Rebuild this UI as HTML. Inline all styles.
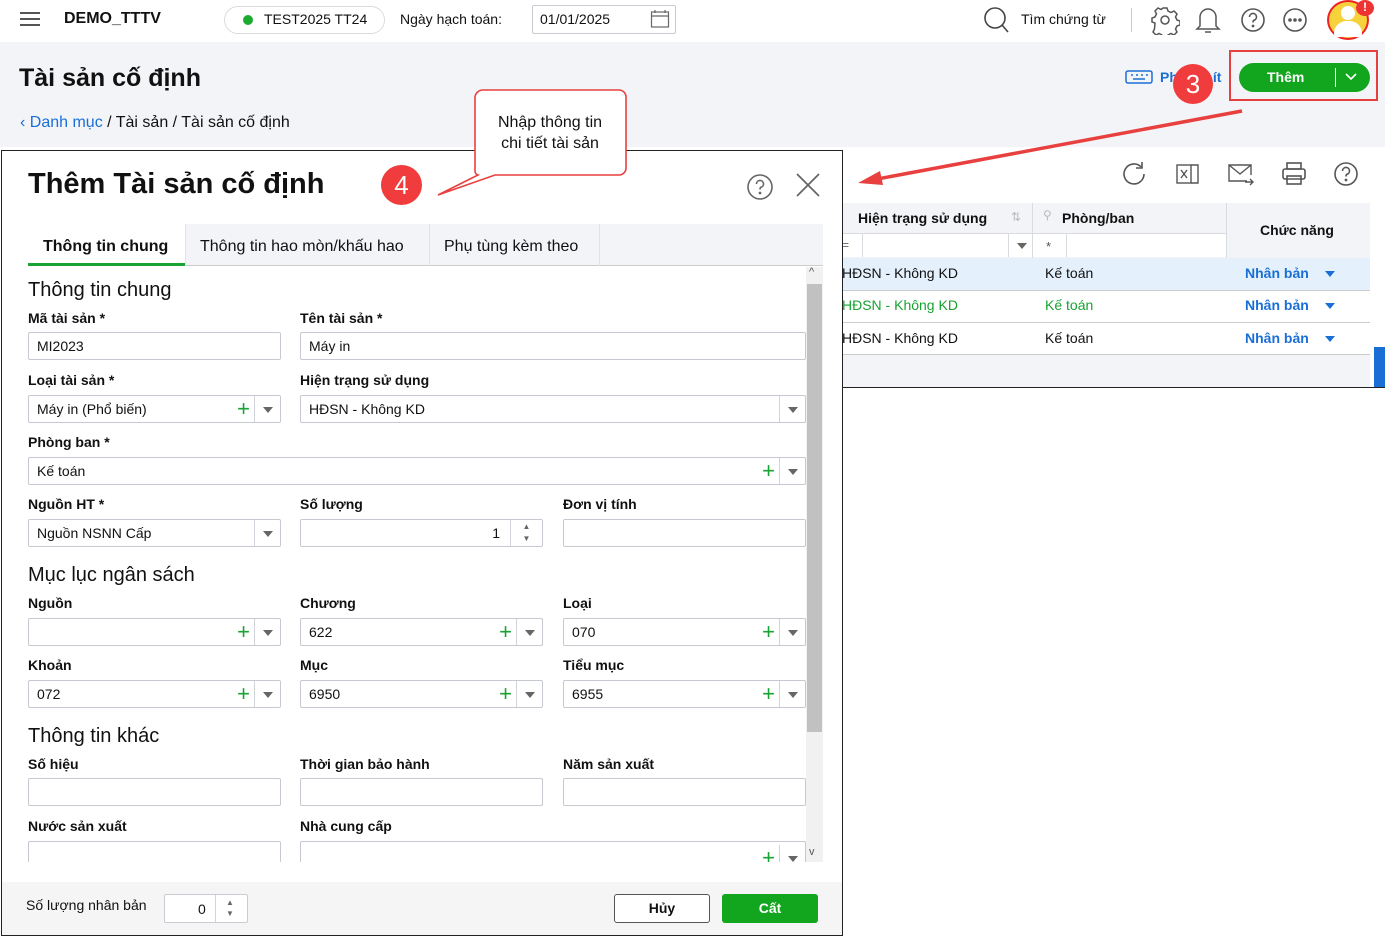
<!DOCTYPE html>
<html><head><meta charset="utf-8">
<style>
*{box-sizing:border-box;margin:0;padding:0}
body{width:1385px;height:937px;position:relative;overflow:hidden;background:#fff;font-family:"Liberation Sans",sans-serif;color:#111;font-size:14px}
.a{position:absolute}
.lbl{position:absolute;font-weight:bold;font-size:14px;color:#111;white-space:nowrap}
.in{position:absolute;height:28px;border:1px solid #c6c9d0;border-radius:2px;background:#fff;font-size:14px;line-height:26px;padding-left:8px;white-space:nowrap}
.dd{position:absolute;right:0;top:0;width:26px;height:26px;border-left:1px solid #d0d3d9}
.dd:after{content:"";position:absolute;left:8px;top:11px;border-left:5px solid transparent;border-right:5px solid transparent;border-top:6px solid #666}
.pl{position:absolute;right:30px;top:0;color:#19a332;font-size:22px;line-height:25px;font-weight:normal}
.sec{position:absolute;font-size:20px;color:#111;white-space:nowrap}
.ico{position:absolute}
</style></head><body>
<!-- top bar -->
<div class="a" style="left:0;top:0;width:1385px;height:42px;background:#fff"></div>
<div class="a" style="left:20px;top:12px;width:20px;height:2px;background:#555;box-shadow:0 6px 0 #555,0 12px 0 #555"></div>
<div class="a" style="left:64px;top:10px;font-weight:bold;font-size:16px">DEMO_TTTV</div>
<div class="a" style="left:224px;top:6px;width:161px;height:28px;border:1px solid #d8dbe0;border-radius:14px"></div>
<div class="a" style="left:243px;top:15px;width:10px;height:10px;border-radius:50%;background:#1aab2e"></div>
<div class="a" style="left:264px;top:11px;font-size:14px">TEST2025 TT24</div>
<div class="a" style="left:400px;top:11px;font-size:14px">Ngày hạch toán:</div>
<div class="a" style="left:532px;top:5px;width:144px;height:29px;border:1px solid #c9ccd3;border-radius:2px"></div>
<div class="a" style="left:540px;top:11px;font-size:14px">01/01/2025</div>
<svg class="ico" style="left:650px;top:9px" width="20" height="20" viewBox="0 0 20 20" fill="none" stroke="#666" stroke-width="1.2"><rect x="1.5" y="3" width="17" height="15"/><line x1="1.5" y1="7" x2="18.5" y2="7"/><line x1="5" y1="1" x2="5" y2="4"/><line x1="15" y1="1" x2="15" y2="4"/></svg>
<svg class="ico" style="left:983px;top:6px" width="28" height="28" viewBox="0 0 28 28" fill="none" stroke="#444" stroke-width="1.6"><circle cx="12" cy="12" r="10"/><line x1="19" y1="19" x2="25" y2="26"/></svg>
<div class="a" style="left:1021px;top:11px;font-size:14px">Tìm chứng từ</div>
<div class="a" style="left:1131px;top:8px;width:1px;height:24px;background:#ccc"></div>
<svg class="ico" style="left:1150px;top:5px" width="30" height="30" viewBox="0 0 30 30" fill="none" stroke="#555" stroke-width="1.5"><circle cx="15" cy="15" r="4"/><path d="M13 3h4l1 3 3 1.5 3-1.5 3 3-1.5 3 1.5 3 3 1v4l-3 1-1.5 3 1.5 3-3 3-3-1.5-3 1.5-1 3h-4l-1-3-3-1.5-3 1.5-3-3 1.5-3L5 18l-3-1v-4l3-1 1.5-3L5 6l3-3 3 1.5z"/></svg>
<svg class="ico" style="left:1194px;top:5px" width="28" height="30" viewBox="0 0 28 30" fill="none" stroke="#555" stroke-width="1.5"><path d="M6 21V12a8 8 0 0 1 16 0v9l3 3H3z"/><path d="M11 27h6"/></svg>
<svg class="ico" style="left:1240px;top:7px" width="26" height="26" viewBox="0 0 26 26" fill="none" stroke="#555" stroke-width="1.6"><circle cx="13" cy="13" r="11"/><path d="M9.5 10a3.5 3.5 0 1 1 4.5 3.3c-1 .4-1 1-1 2.2"/><circle cx="13" cy="19" r=".6" fill="#555"/></svg>
<svg class="ico" style="left:1282px;top:7px" width="26" height="26" viewBox="0 0 26 26" fill="none" stroke="#555" stroke-width="1.6"><circle cx="13" cy="13" r="11"/><circle cx="8" cy="13" r="1" fill="#555"/><circle cx="13" cy="13" r="1" fill="#555"/><circle cx="18" cy="13" r="1" fill="#555"/></svg>
<div class="a" style="left:1327px;top:0;width:42px;height:40px;border-radius:50%;background:#f6d33c;border:2px solid #e22"></div>
<div class="a" style="left:1341px;top:6px;width:14px;height:14px;border-radius:50%;background:#fff"></div>
<div class="a" style="left:1334px;top:21px;width:28px;height:16px;border-radius:14px 14px 4px 4px;background:#fff"></div>
<div class="a" style="left:1356px;top:0;width:18px;height:16px;border-radius:50%;background:#e33;color:#fff;font-size:12px;font-weight:bold;text-align:center;line-height:14px">!</div>

<!-- grey page header -->
<div class="a" style="left:0;top:42px;width:1385px;height:105px;background:#f3f4f8"></div>
<div class="a" style="left:19px;top:64px;font-size:25px;font-weight:bold">Tài sản cố định</div>
<div class="a" style="left:20px;top:114px;font-size:16px;color:#111"><span style="color:#1a6fd6">‹ Danh mục</span> / Tài sản / Tài sản cố định</div>
<svg class="ico" style="left:1125px;top:70px" width="28" height="18" viewBox="0 0 28 18" fill="none" stroke="#1a6fd6" stroke-width="1.5"><rect x="1" y="1" width="26" height="12" rx="2"/><path d="M6 5h2M11 5h2M16 5h2M21 5h2M8 9h12" /></svg>
<div class="a" style="left:1160px;top:69px;font-size:14px;color:#1a6fd6;font-weight:bold">Ph&nbsp;&nbsp;&nbsp;&nbsp;&nbsp;&nbsp;&nbsp;&nbsp;&nbsp;ít</div>
<div class="a" style="left:1173px;top:64px;width:40px;height:40px;border-radius:50%;background:#f03c3c;color:#fff;font-size:26px;text-align:center;line-height:40px">3</div>
<div class="a" style="left:1229px;top:50px;width:149px;height:51px;border:2px solid #e8403f"></div>
<div class="a" style="left:1239px;top:63px;width:131px;height:29px;border-radius:15px;background:#12a51e;color:#fff;font-weight:bold;font-size:14px;line-height:29px;padding-left:28px">Thêm</div>
<div class="a" style="left:1335px;top:68px;width:1px;height:19px;background:#fff"></div>
<svg class="ico" style="left:1345px;top:72px" width="12" height="10" viewBox="0 0 12 10" fill="none" stroke="#fff" stroke-width="1.6"><path d="M1 2l5 5 5-5"/></svg>

<!-- right table area -->
<div class="a" style="left:842px;top:147px;width:528px;height:240px;background:#fff"></div>
<svg class="ico" style="left:1121px;top:160px" width="28" height="28" viewBox="0 0 28 28" fill="none" stroke="#555" stroke-width="1.6"><path d="M23 14a10 10 0 1 1-3-7.2"/><path d="M21 2v6h-6"/></svg>
<svg class="ico" style="left:1176px;top:162px" width="24" height="24" viewBox="0 0 24 24" fill="none" stroke="#555" stroke-width="1.4"><rect x="1" y="3" width="14" height="18"/><path d="M15 3h7v18h-7"/><path d="M5 8l6 8M11 8l-6 8"/></svg>
<svg class="ico" style="left:1227px;top:162px" width="28" height="26" viewBox="0 0 28 26" fill="none" stroke="#555" stroke-width="1.4"><path d="M20 19H2V3h22v10"/><path d="M2 3l11 9 11-9"/><path d="M18 20h8M23 17l3 3-3 3"/></svg>
<svg class="ico" style="left:1280px;top:160px" width="28" height="28" viewBox="0 0 28 28" fill="none" stroke="#555" stroke-width="1.6"><rect x="7" y="3" width="14" height="6"/><rect x="3" y="9" width="22" height="10" rx="2"/><rect x="7" y="16" width="14" height="8"/></svg>
<svg class="ico" style="left:1333px;top:161px" width="26" height="26" viewBox="0 0 26 26" fill="none" stroke="#555" stroke-width="1.6"><circle cx="13" cy="13" r="11"/><path d="M9.5 10a3.5 3.5 0 1 1 4.5 3.3c-1 .4-1 1-1 2.2"/><circle cx="13" cy="19" r=".6" fill="#555"/></svg>
<div class="a" style="left:842px;top:203px;width:528px;height:55px;background:#f3f4f8"></div>
<div class="a" style="left:842px;top:233px;width:384px;height:24px;background:#fff;border-top:1px solid #d8dbe0"></div>
<div class="a" style="left:1032px;top:203px;width:1px;height:55px;background:#d8dbe0"></div>
<div class="a" style="left:1226px;top:203px;width:1px;height:55px;background:#d8dbe0"></div>
<div class="a" style="left:862px;top:233px;width:1px;height:24px;background:#d8dbe0"></div>
<div class="a" style="left:1008px;top:233px;width:1px;height:24px;background:#d8dbe0"></div>
<div class="a" style="left:1066px;top:233px;width:1px;height:24px;background:#d8dbe0"></div>
<div class="a" style="left:858px;top:210px;font-weight:bold;font-size:14px">Hiện trạng sử dụng</div>
<div class="a" style="left:1011px;top:210px;font-size:12px;color:#bbb">⇅</div>
<div class="a" style="left:1043px;top:208px;font-size:12px;color:#bbb">⚲</div>
<div class="a" style="left:1062px;top:210px;font-weight:bold;font-size:14px">Phòng/ban</div>
<div class="a" style="left:1260px;top:222px;font-weight:bold;font-size:14px">Chức năng</div>
<div class="a" style="left:842px;top:238px;font-size:12px;color:#666">=</div>
<div class="a" style="left:1017px;top:243px;border-left:5px solid transparent;border-right:5px solid transparent;border-top:6px solid #666"></div>
<div class="a" style="left:1046px;top:239px;font-size:13px;color:#555">*</div>
<div class="a" style="left:842px;top:258px;width:528px;height:32px;background:#e4f1fc"></div>
<div class="a" style="left:842px;top:290px;width:528px;height:1px;background:#ccc"></div>
<div class="a" style="left:842px;top:322px;width:528px;height:1px;background:#ccc"></div>
<div class="a" style="left:842px;top:354px;width:528px;height:1px;background:#ccc"></div>
<div class="a" style="left:842px;top:355px;width:528px;height:32px;background:#f3f4f8"></div>
<div class="a" style="left:1374px;top:347px;width:11px;height:40px;background:#1a6fd6"></div>
<div class="a" style="left:842px;top:265px;font-size:14px">HĐSN - Không KD</div>
<div class="a" style="left:1045px;top:265px;font-size:14px">Kế toán</div>
<div class="a" style="left:842px;top:297px;font-size:14px;color:#19a332">HĐSN - Không KD</div>
<div class="a" style="left:1045px;top:297px;font-size:14px;color:#19a332">Kế toán</div>
<div class="a" style="left:842px;top:330px;font-size:14px">HĐSN - Không KD</div>
<div class="a" style="left:1045px;top:330px;font-size:14px">Kế toán</div>
<div class="a" style="left:1245px;top:265px;font-size:14px;color:#1a6fd6;font-weight:bold">Nhân bản</div>
<div class="a" style="left:1245px;top:297px;font-size:14px;color:#1a6fd6;font-weight:bold">Nhân bản</div>
<div class="a" style="left:1245px;top:330px;font-size:14px;color:#1a6fd6;font-weight:bold">Nhân bản</div>
<div class="a" style="left:1325px;top:271px;border-left:5px solid transparent;border-right:5px solid transparent;border-top:6px solid #1a6fd6"></div>
<div class="a" style="left:1325px;top:303px;border-left:5px solid transparent;border-right:5px solid transparent;border-top:6px solid #1a6fd6"></div>
<div class="a" style="left:1325px;top:336px;border-left:5px solid transparent;border-right:5px solid transparent;border-top:6px solid #1a6fd6"></div>
<div class="a" style="left:842px;top:387px;width:543px;height:1px;background:#222"></div>

<!-- red arrow -->
<svg class="ico" style="left:850px;top:105px" width="400" height="85" viewBox="0 0 400 85"><line x1="392" y1="6" x2="22" y2="75" stroke="#e8403f" stroke-width="3.5"/><path d="M8 78l22-12 3 14z" fill="#e8403f"/></svg>

<!-- dialog -->
<div class="a" style="left:1px;top:150px;width:842px;height:786px;background:#fff;border:1px solid #222"></div>
<div class="a" style="left:28px;top:168px;font-size:29px;font-weight:bold">Thêm Tài sản cố định</div>
<div class="a" style="left:381px;top:165px;width:41px;height:40px;border-radius:50%;background:#f03c3c;color:#fff;font-size:26px;text-align:center;line-height:40px">4</div>
<svg class="ico" style="left:745px;top:172px" width="30" height="30" viewBox="0 0 30 30" fill="none" stroke="#666" stroke-width="1.6"><circle cx="15" cy="15" r="12"/><path d="M11.5 12a3.5 3.5 0 1 1 4.5 3.3c-1 .4-1 1-1 2.2"/><circle cx="15" cy="21" r=".6" fill="#666"/></svg>
<svg class="ico" style="left:795px;top:172px" width="26" height="26" viewBox="0 0 26 26" stroke="#666" stroke-width="1.8"><line x1="2" y1="2" x2="24" y2="24"/><line x1="24" y1="2" x2="2" y2="24"/></svg>

<!-- callout -->
<svg class="ico" style="left:430px;top:85px" width="205" height="115" viewBox="0 0 205 115"><path d="M53 5h136a7 7 0 0 1 7 7v71a7 7 0 0 1-7 7H65L8 110 48 90a4 4 0 0 1-3-4V12a8 8 0 0 1 8-7z" fill="#fff" stroke="#e8403f" stroke-width="1.6"/></svg>
<div class="a" style="left:476px;top:112px;width:148px;text-align:center;font-size:16px;line-height:21px">Nhập thông tin<br>chi tiết tài sản</div>

<!-- tabs -->
<div class="a" style="left:28px;top:224px;width:795px;height:42px;background:#f3f4f8;border-bottom:1px solid #ccc"></div>
<div class="a" style="left:28px;top:224px;width:157px;height:42px;background:#fff;border-bottom:3px solid #19a332"></div>
<div class="a" style="left:185px;top:224px;width:1px;height:42px;background:#e0e2e6"></div>
<div class="a" style="left:429px;top:224px;width:1px;height:42px;background:#e0e2e6"></div>
<div class="a" style="left:599px;top:224px;width:1px;height:42px;background:#e0e2e6"></div>
<div class="a" style="left:43px;top:238px;font-size:16px;font-weight:bold">Thông tin chung</div>
<div class="a" style="left:200px;top:238px;font-size:16px">Thông tin hao mòn/khấu hao</div>
<div class="a" style="left:444px;top:238px;font-size:16px">Phụ tùng kèm theo</div>

<!-- scrollbar -->
<div class="a" style="left:806px;top:267px;width:17px;height:595px;background:#f1f1f1"></div>
<div class="a" style="left:807px;top:284px;width:15px;height:448px;background:#c1c1c1"></div>
<div class="a" style="left:809px;top:266px;font-size:11px;color:#555">^</div>
<div class="a" style="left:809px;top:846px;font-size:11px;color:#555">v</div>

<!-- form content -->
<div class="a" style="left:0;top:267px;width:806px;height:595px;overflow:hidden">
<div style="position:absolute;left:0;top:-267px;width:806px;height:900px">
<div class="sec" style="left:28px;top:279px">Thông tin chung</div>
<div class="lbl" style="left:28px;top:310px">Mã tài sản *</div>
<div class="lbl" style="left:300px;top:310px">Tên tài sản *</div>
<div class="in" style="left:28px;top:332px;width:253px">MI2023</div>
<div class="in" style="left:300px;top:332px;width:506px">Máy in</div>

<div class="lbl" style="left:28px;top:372px">Loại tài sản *</div>
<div class="lbl" style="left:300px;top:372px">Hiện trạng sử dụng</div>
<div class="in" style="left:28px;top:395px;width:253px">Máy in (Phổ biến)<span class="pl">+</span><span class="dd"></span></div>
<div class="in" style="left:300px;top:395px;width:506px">HĐSN - Không KD<span class="dd"></span></div>

<div class="lbl" style="left:28px;top:434px">Phòng ban *</div>
<div class="in" style="left:28px;top:457px;width:778px">Kế toán<span class="pl">+</span><span class="dd"></span></div>

<div class="lbl" style="left:28px;top:496px">Nguồn HT *</div>
<div class="lbl" style="left:300px;top:496px">Số lượng</div>
<div class="lbl" style="left:563px;top:496px">Đơn vị tính</div>
<div class="in" style="left:28px;top:519px;width:253px">Nguồn NSNN Cấp<span class="dd"></span></div>
<div class="in" style="left:300px;top:519px;width:243px;text-align:right;padding-right:42px">1<span style="position:absolute;right:0;top:0;width:32px;height:26px;border-left:1px solid #d0d3d9;font-size:8px;line-height:12px;text-align:center;color:#666;padding-top:1px">▲<br>▼</span></div>
<div class="in" style="left:563px;top:519px;width:243px"></div>

<div class="sec" style="left:28px;top:564px">Mục lục ngân sách</div>
<div class="lbl" style="left:28px;top:595px">Nguồn</div>
<div class="lbl" style="left:300px;top:595px">Chương</div>
<div class="lbl" style="left:563px;top:595px">Loại</div>
<div class="in" style="left:28px;top:618px;width:253px"><span class="pl">+</span><span class="dd"></span></div>
<div class="in" style="left:300px;top:618px;width:243px">622<span class="pl">+</span><span class="dd"></span></div>
<div class="in" style="left:563px;top:618px;width:243px">070<span class="pl">+</span><span class="dd"></span></div>

<div class="lbl" style="left:28px;top:657px">Khoản</div>
<div class="lbl" style="left:300px;top:657px">Mục</div>
<div class="lbl" style="left:563px;top:657px">Tiểu mục</div>
<div class="in" style="left:28px;top:680px;width:253px">072<span class="pl">+</span><span class="dd"></span></div>
<div class="in" style="left:300px;top:680px;width:243px">6950<span class="pl">+</span><span class="dd"></span></div>
<div class="in" style="left:563px;top:680px;width:243px">6955<span class="pl">+</span><span class="dd"></span></div>

<div class="sec" style="left:28px;top:725px">Thông tin khác</div>
<div class="lbl" style="left:28px;top:756px">Số hiệu</div>
<div class="lbl" style="left:300px;top:756px">Thời gian bảo hành</div>
<div class="lbl" style="left:563px;top:756px">Năm sản xuất</div>
<div class="in" style="left:28px;top:778px;width:253px"></div>
<div class="in" style="left:300px;top:778px;width:243px"></div>
<div class="in" style="left:563px;top:778px;width:243px"></div>

<div class="lbl" style="left:28px;top:818px">Nước sản xuất</div>
<div class="lbl" style="left:300px;top:818px">Nhà cung cấp</div>
<div class="in" style="left:28px;top:841px;width:253px"></div>
<div class="in" style="left:300px;top:841px;width:506px"><span class="pl" style="top:3px">+</span><span class="dd" style="top:3px"></span></div>
</div></div>

<!-- footer -->
<div class="a" style="left:2px;top:882px;width:840px;height:53px;background:#f5f5f5"></div>
<div class="a" style="left:26px;top:897px;font-size:14px">Số lượng nhân bản</div>
<div class="a" style="left:164px;top:894px;width:84px;height:29px;border:1px solid #c9ccd3;border-radius:2px;background:#fff"></div>
<div class="a" style="left:198px;top:901px;font-size:14px">0</div>
<div class="a" style="left:215px;top:895px;width:1px;height:27px;background:#d0d3d9"></div>
<div class="a" style="left:226px;top:897px;font-size:8px;line-height:11px;color:#666">▲<br>▼</div>
<div class="a" style="left:614px;top:894px;width:96px;height:29px;border:1px solid #555;border-radius:3px;background:#fff;text-align:center;line-height:27px;font-weight:bold;font-size:14px">Hủy</div>
<div class="a" style="left:722px;top:894px;width:96px;height:29px;border-radius:3px;background:#12a51e;color:#fff;text-align:center;line-height:29px;font-weight:bold;font-size:14px">Cất</div>
</body></html>
